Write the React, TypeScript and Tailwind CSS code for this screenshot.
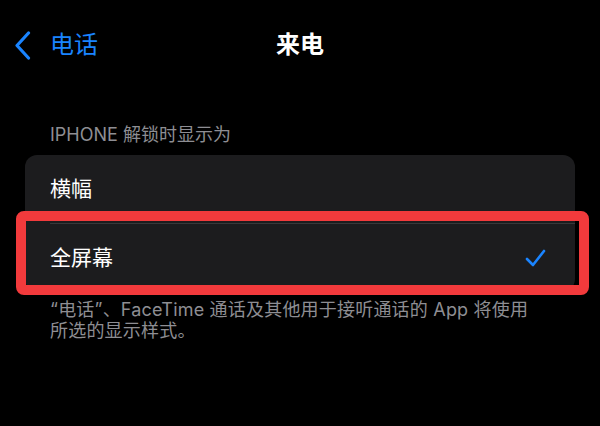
import React from "react";

export default function App() {
  return (
    <div className="relative w-[600px] h-[426px] overflow-hidden bg-black font-['Inter','Noto_Sans_CJK_SC',sans-serif]">
      {/* Nav bar */}
      <div className="grid grid-cols-[1fr_auto_1fr] items-center h-[90px]">
        <div className="flex items-center pl-[14px]">
          <svg width="17" height="29" viewBox="0 0 17 29" fill="none">
            <path d="M14.5 2 L3 14.5 L14.5 27" stroke="#1a84ff" strokeWidth="3.2" strokeLinecap="round" strokeLinejoin="round" />
          </svg>
          <span className="ml-[19px] text-[24px] leading-[30px] text-[#1a84ff]">电话</span>
        </div>
        <div className="text-[24px] leading-[30px] font-semibold text-white">来电</div>
        <div />
      </div>

      {/* Section header */}
      <div className="mt-[34px] px-[50px] text-[18px] leading-[22px] text-[#8e8e93]">IPHONE 解锁时显示为</div>

      {/* Card */}
      <div className="mt-[9px] mx-[25px] rounded-[12px] bg-[#1c1c1e] overflow-hidden">
        <div className="flex items-center h-[68px] pl-[25px] text-[21px] text-white">横幅</div>
        <div className="ml-[25px] h-px bg-[#38383a]" />
        <div className="flex items-center justify-between h-[67px] pl-[25px] pr-[29px] text-[21px] text-white">
          <span>全屏幕</span>
          <svg width="21" height="18" viewBox="0 0 21 18" fill="none">
            <path d="M2 10 L8 16 L19 2" stroke="#1a84ff" strokeWidth="2.6" strokeLinecap="round" strokeLinejoin="round" />
          </svg>
        </div>
      </div>

      {/* Footer */}
      <div className="mt-[8px] px-[50px] text-[18px] leading-[21px] tracking-[0.2px] text-[#8e8e93]">
        “电话”、FaceTime 通话及其他用于接听通话的 App 将使用
        <br />
        所选的显示样式。
      </div>

      {/* Red annotation box */}
      <div className="absolute left-[16px] top-[211px] w-[573px] h-[84px] border-[10px] border-[#f23a3c] rounded-[8px]" />
    </div>
  );
}
